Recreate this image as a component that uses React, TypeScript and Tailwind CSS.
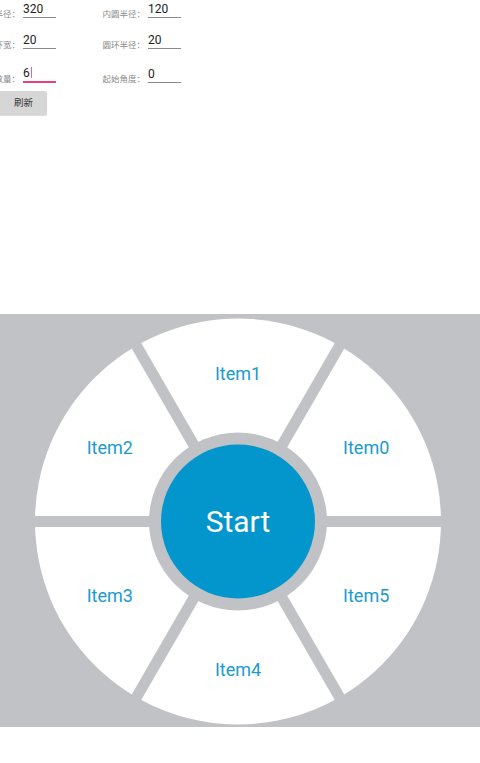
import React from "react";

const items = ["Item0", "Item1", "Item2", "Item3", "Item4", "Item5"];

const Field = ({
	label,
	value,
	labelWidth,
	focused,
}: {
	label: string;
	value: string;
	labelWidth: string;
	focused?: boolean;
}) => {
	return (
		<div className="flex items-end">
			<div className={`${labelWidth} flex justify-end overflow-hidden whitespace-nowrap text-[8.5px] leading-[10px] text-[#8a8a8a] mb-[-1px]`}>
				{label}
			</div>
			<div
				className={
					focused
						? "ml-[3px] w-[33px] h-[17px] border-b-2 border-[#e8407a] text-[12px] leading-[14px] text-[#222]"
						: "ml-[3px] w-[33px] h-[16px] border-b border-[#8a8a8a] text-[12px] leading-[14px] text-[#222]"
				}
			>
				{value}
				{focused && <span className="inline-block w-[1px] h-[11px] bg-[#f06292] align-[-1px] ml-[1px]"></span>}
			</div>
		</div>
	);
};

const Row = ({ children, className }: { children: React.ReactNode; className: string }) => (
	<div className={`flex ${className}`}>{children}</div>
);

const RadialMenu = () => {
	const cx = 238;
	const cy = 207.5;
	const labelR = 148;
	return (
		<svg width="480" height="413" viewBox="0 0 480 413">
			<circle cx={cx} cy={cy} r={203} fill="#ffffff" />
			{[0, 60, 120].map((a) => {
				const rad = (a * Math.PI) / 180;
				const dx = Math.cos(rad) * 210;
				const dy = Math.sin(rad) * 210;
				return (
					<line
						key={a}
						x1={cx - dx}
						y1={cy - dy}
						x2={cx + dx}
						y2={cy + dy}
						stroke="#c1c2c6"
						strokeWidth={11}
					/>
				);
			})}
			<circle cx={cx} cy={cy} r={89} fill="#c1c2c6" />
			<circle cx={cx} cy={cy} r={77} fill="#0296cd" />
			<text
				x={cx}
				y={cy + 10.5}
				textAnchor="middle"
				fill="#ffffff"
				fontSize="30"
				fontFamily="Roboto, sans-serif"
			>
				Start
			</text>
			{items.map((t, i) => {
				const rad = ((30 + i * 60) * Math.PI) / 180;
				return (
					<text
						key={t}
						x={cx + Math.cos(rad) * labelR}
						y={cy - Math.sin(rad) * labelR + 6.5}
						textAnchor="middle"
						fill="#1a9ad0"
						fontSize="18"
						fontFamily="Roboto, sans-serif"
					>
						{t}
					</text>
				);
			})}
		</svg>
	);
};

const App = () => {
	return (
		<div className="w-[480px] h-[763px] bg-white overflow-hidden" style={{ fontFamily: "Roboto, 'Noto Sans CJK SC', sans-serif" }}>
			<div className="h-[314px]">
				<Row className="pt-[2px]">
					<div className="w-[100px]">
						<Field label="外圆半径：" value="320" labelWidth="w-[20px]" />
					</div>
					<Field label="内圆半径：" value="120" labelWidth="w-[45px]" />
				</Row>
				<Row className="mt-[15px]">
					<div className="w-[100px]">
						<Field label="圆环宽：" value="20" labelWidth="w-[20px]" />
					</div>
					<Field label="圆环半径：" value="20" labelWidth="w-[45px]" />
				</Row>
				<Row className="mt-[17px]">
					<div className="w-[100px]">
						<Field label="菜单数量：" value="6" labelWidth="w-[20px]" focused />
					</div>
					<Field label="起始角度：" value="0" labelWidth="w-[45px]" />
				</Row>
				<button className="mt-[8px] w-[47px] h-[24px] bg-[#d6d6d6] rounded-r-[2px] text-[9.5px] text-[#333] shadow-[0_1px_1px_rgba(0,0,0,0.15)]">
					刷新
				</button>
			</div>
			<div className="h-[413px] bg-[#c1c2c6]">
				<RadialMenu />
			</div>
		</div>
	);
};

export default App;
